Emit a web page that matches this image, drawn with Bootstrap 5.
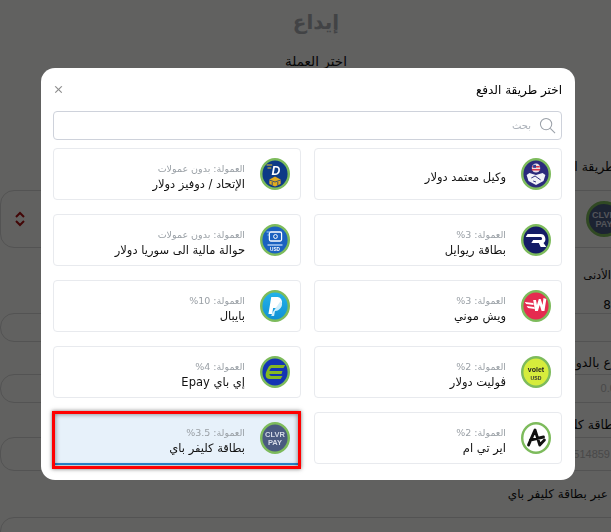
<!DOCTYPE html>
<html lang="ar" dir="rtl">
<head>
<meta charset="utf-8">
<title>إيداع</title>
<link href="https://cdn.jsdelivr.net/npm/bootstrap@5.3.0/dist/css/bootstrap.min.css" rel="stylesheet">
<style>
html,body{height:532px;overflow:hidden}
body{background:#f9f9f7;color:#111;font-family:"DejaVu Sans","Noto Sans",sans-serif}
.page-wrap{width:632px;height:532px;margin-right:-21px;overflow:hidden}
.pg-title{height:44px;padding-top:10px;margin:0;font-size:20px;font-weight:700;color:#a9adb3;text-align:center}
.pg-sub{height:24px;margin-top:4px;padding-top:3px;font-size:13.5px;text-align:center}
.pg-label{font-size:12.5px;padding-right:17px;white-space:nowrap;margin-left:575px;overflow:hidden}
.pg-val{height:17px;margin-top:10px;margin-bottom:-1px;padding-right:21px;font-size:12px;line-height:17px}
.pg-box{border:1px solid #d5d5d5;border-radius:14px;padding-right:9px;font-size:11px;color:#bbb;font-family:"Liberation Sans",sans-serif}
.lb-method{height:20px;margin-top:86px}
.bx-method{height:58px;margin-top:12px}
.lb-min{height:20px;margin-top:19px;padding-right:21px;font-size:11.5px}
.bx-a{height:29px}
.lb-b{height:20px;margin-top:11px;margin-right:-3px;padding-right:0;line-height:20px}
.bx-b{height:29px;margin-top:1px}
.lb-c{height:20px;margin-top:13px;padding-right:14px}
.bx-c{height:34px;margin-top:1px;padding-right:21px}
.lb-d{height:20px;margin-top:13px;padding-right:24px;font-size:12px;line-height:20px}
.bx-d{height:60px;margin-top:13px}
.chev{width:14px;height:20px;margin-left:12px}
.modal-backdrop.show{opacity:.61}
.modal-dialog.pick-dialog{width:534px;max-width:534px;margin:68px 36px 0 41px}
.pick-dialog .modal-content{border:0;border-radius:14px;height:412px}
.pick-dialog .modal-header{height:43px;padding:0 13px 0 13px;border:0;margin-top:0}
.pick-dialog .modal-title{font-size:12px;font-weight:400;line-height:1;color:#000;padding-top:1px}
.pick-dialog .btn-close{width:9px;height:9px;padding:0;margin:0;background-size:9px;opacity:.45}
.pick-dialog .modal-body{padding:0 13px 16px 12px}
.find-box{height:29px;border:1px solid #ced2db;border-radius:4px;margin-bottom:8px;padding:0 5px 0 0}
.find-ph{font-size:10px;color:#aab0b8}
.pay-row{--bs-gutter-x:13px;--bs-gutter-y:14px}
.pay-tile{height:52px;border:1px solid #e8eaee;border-radius:4px;background:#fff;padding:0 10px 0 0;gap:15px}
.pay-tile.picked{height:53px;background:#e7f1fa;border-color:#e7f1fa;border-bottom:2px solid #2b8fdc;border-radius:0}
.pay-ic{width:30px;height:32px;flex:none}
.pay-ic-lg{width:36px;height:36px}
.pay-ring{stroke:#7dbb5c;stroke-width:2.6}
.pay-txt{padding-top:5px}
.pay-fee{font-size:9.5px;color:#9aa0a6;line-height:15px}
.pay-name{font-size:11.5px;color:#111;line-height:16px;white-space:nowrap}
.red-mark{position:absolute;left:-2px;right:-1px;top:-2px;bottom:-6px;border:3px solid #f00;box-shadow:0 0 4px rgba(0,0,0,.55),inset 0 0 5px rgba(0,0,0,.5);pointer-events:none}
svg text{font-family:"Liberation Sans",sans-serif;font-weight:700}
</style>
</head>
<body>
<div class="page-wrap">
  <h1 class="pg-title">إيداع</h1>
  <div class="pg-sub">اختر العملة</div>
  <div class="pg-label lb-method">طريقة الدفع</div>
  <div class="pg-box bx-method d-flex align-items-center justify-content-between">
    <svg class="pay-ic pay-ic-lg" viewBox="0 0 32 32"><circle class="pay-ring" cx="16" cy="16" r="14.700" fill="#4a5a80"/><text x="16" y="15" text-anchor="middle" font-size="8" fill="#d5dae6">CLVR</text><text x="16" y="23" text-anchor="middle" font-size="8" fill="#d5dae6">PAY</text></svg>
    <svg class="chev" viewBox="0 0 14 20" fill="none" stroke="#a11" stroke-width="2"><path d="M3 8l4-4 4 4M3 12l4 4 4-4"/></svg>
  </div>
  <div class="pg-label lb-min">الأدنى</div>
  <div class="pg-label pg-val">8</div>
  <div class="pg-box bx-a"></div>
  <div class="pg-label lb-b">الإيداع بالدولار</div>
  <div class="pg-box bx-b d-flex align-items-center">0.00</div>
  <div class="pg-label lb-c">بطاقة كليفر</div>
  <div class="pg-box bx-c d-flex align-items-center">514859</div>
  <div class="lb-d">عبر بطاقة كليفر باي</div>
  <div class="pg-box bx-d"></div>
</div>

<div class="modal-backdrop show"></div>
<div class="modal d-block" tabindex="-1">
  <div class="modal-dialog pick-dialog">
    <div class="modal-content">
      <div class="modal-header">
        <h5 class="modal-title">اختر طريقة الدفع</h5>
        <button type="button" class="btn-close" aria-label="إغلاق"></button>
      </div>
      <div class="modal-body">
        <div class="find-box d-flex align-items-center gap-2">
          <svg width="17" height="17" viewBox="0 0 18 18" fill="none" stroke="#9aa0a8" stroke-width="1.1"><circle cx="7.5" cy="7.5" r="6"/><path d="M12 12l5 5"/></svg>
          <span class="find-ph">بحث</span>
        </div>
        <div class="row pay-row">
          <div class="col-6"><div class="pay-tile d-flex align-items-center">
            <svg class="pay-ic" preserveAspectRatio="none" viewBox="0 0 32 32"><circle class="pay-ring" cx="16" cy="16" r="14.700" fill="#2b2a7c"/><circle cx="16" cy="10" r="4.500" fill="#e9dfe6"/><path d="M12 8h8v1.500h-8zM11.600 11h8.800v1.500h-8.800z" fill="#d9364a"/><path d="M13 6.800h3v3h-3z" fill="#2f3f9a"/><path d="M6 17l3-2 7 2 7-2 3 2-2 6-8 4-8-4z" fill="#f1f2f8"/><path d="M11 20l4-2 3 2 3 2M13 23l3 1" stroke="#2b2a7c" stroke-width="1" fill="none"/></svg>
            <div class="pay-txt"><div class="pay-name">وكيل معتمد دولار</div></div>
          </div></div>
          <div class="col-6"><div class="pay-tile d-flex align-items-center">
            <svg class="pay-ic" preserveAspectRatio="none" viewBox="0 0 32 32"><circle class="pay-ring" cx="16" cy="16" r="14.700" fill="#0d3a86"/><text x="17" y="17" text-anchor="middle" font-size="13" font-style="italic" fill="#fff">D</text><path d="M7 7h6M8 10h4" stroke="#e8c12f" stroke-width="1.200"/><path d="M10 21.500l6-3 6 3v4.500l-6 2.500-6-2.500z" fill="#e2ab1e"/><path d="M10 22l6 2 6-2M13 24v3M19 24v3" stroke="#0d3a86" stroke-width=".8" fill="none"/></svg>
            <div class="pay-txt"><div class="pay-fee">العمولة: بدون عمولات</div><div class="pay-name">الإتحاد / دوفيز دولار</div></div>
          </div></div>
          <div class="col-6"><div class="pay-tile d-flex align-items-center">
            <svg class="pay-ic" preserveAspectRatio="none" viewBox="0 0 32 32"><circle class="pay-ring" cx="16" cy="16" r="14.700" fill="#141c66"/><path d="M7 10h14a5 5 0 0 1 3 9l3 4h-6l-2-4H11l2-3h8a1.500 1.500 0 0 0 0-3H5z" fill="#fff"/></svg>
            <div class="pay-txt"><div class="pay-fee">العمولة: 3%</div><div class="pay-name">بطاقة ريوايل</div></div>
          </div></div>
          <div class="col-6"><div class="pay-tile d-flex align-items-center">
            <svg class="pay-ic" preserveAspectRatio="none" viewBox="0 0 32 32"><circle class="pay-ring" cx="16" cy="16" r="14.700" fill="#1b62c0"/><rect x="10" y="8" width="13" height="9" rx="1.500" fill="none" stroke="#fff" stroke-width="1.300"/><circle cx="16.500" cy="12.500" r="2" fill="none" stroke="#fff"/><path d="M7 8h4M8 11h2" stroke="#9fd0ff"/><path d="M8 21h16" stroke="#cfe4ff" stroke-width="1.200"/><text x="16" y="27" text-anchor="middle" font-size="5" fill="#fff">USD</text></svg>
            <div class="pay-txt"><div class="pay-fee">العمولة: بدون عمولات</div><div class="pay-name">حوالة مالية الى سوريا دولار</div></div>
          </div></div>
          <div class="col-6"><div class="pay-tile d-flex align-items-center">
            <svg class="pay-ic" preserveAspectRatio="none" viewBox="0 0 32 32"><circle class="pay-ring" cx="16" cy="16" r="14.700" fill="#e52b50"/><path d="M13 10l2 11h3l2-6 2 6h3l2-12-3-1-1 7-2-6h-2l-2 6-1-5zM4 12l9 1 .5 2-8-1zM6 16l8 1 .5 2-7-1z" fill="#fff"/></svg>
            <div class="pay-txt"><div class="pay-fee">العمولة: 3%</div><div class="pay-name">ويش موني</div></div>
          </div></div>
          <div class="col-6"><div class="pay-tile d-flex align-items-center">
            <svg class="pay-ic" preserveAspectRatio="none" viewBox="0 0 32 32"><defs><linearGradient id="pp" x1="0" y1="0" x2="0" y2="1"><stop offset="0" stop-color="#25b4ea"/><stop offset="1" stop-color="#0f8fd3"/></linearGradient></defs><circle class="pay-ring" cx="16" cy="16" r="14.700" fill="url(#pp)"/><path d="M12 7h7a5 5 0 0 1 4 7c-1 3-3 4-7 4h-2l-1 6H9z" fill="#fff"/><path d="M22 11c2 2 2 5 0 7s-3 3-6 3l-1 5h-3l1-3" fill="#cfeefb"/></svg>
            <div class="pay-txt"><div class="pay-fee">العمولة: 10%</div><div class="pay-name">بايبال</div></div>
          </div></div>
          <div class="col-6"><div class="pay-tile d-flex align-items-center">
            <svg class="pay-ic" preserveAspectRatio="none" viewBox="0 0 32 32"><circle class="pay-ring" cx="16" cy="16" r="14.700" fill="#d6ec3c"/><text x="16" y="16" text-anchor="middle" font-size="7.500" fill="#222">volet</text><text x="16" y="24" text-anchor="middle" font-size="5.500" fill="#333">USD</text></svg>
            <div class="pay-txt"><div class="pay-fee">العمولة: 2%</div><div class="pay-name">ڤوليت دولار</div></div>
          </div></div>
          <div class="col-6"><div class="pay-tile d-flex align-items-center">
            <svg class="pay-ic" preserveAspectRatio="none" viewBox="0 0 32 32"><circle class="pay-ring" cx="16" cy="16" r="14.700" fill="#1434b4"/><path d="M12 9h15l-2 3H12a6 6 0 0 0-2 3h14l-1 3H10c0 1 1 2 2 2h12l-2 3H10c-4 0-5-4-3-8s3-6 5-6z" fill="#86b821"/></svg>
            <div class="pay-txt"><div class="pay-fee">العمولة: 4%</div><div class="pay-name">إي باي Epay</div></div>
          </div></div>
          <div class="col-6"><div class="pay-tile d-flex align-items-center">
            <svg class="pay-ic" preserveAspectRatio="none" viewBox="0 0 32 32"><circle class="pay-ring" cx="16" cy="16" r="14.700" fill="#fff"/><path d="M8 23L15 8l5 15M10 18l14-3M20 23l5-5" fill="none" stroke="#111" stroke-width="3" stroke-linecap="round" stroke-linejoin="round"/></svg>
            <div class="pay-txt"><div class="pay-fee">العمولة: 2%</div><div class="pay-name">اير تي ام</div></div>
          </div></div>
          <div class="col-6"><div class="pay-tile picked d-flex align-items-center position-relative">
            <svg class="pay-ic" preserveAspectRatio="none" viewBox="0 0 32 32"><circle class="pay-ring" cx="16" cy="16" r="14.700" fill="#4a5a80"/><text x="16" y="15" text-anchor="middle" font-size="8" fill="#d5dae6">CLVR</text><text x="16" y="23" text-anchor="middle" font-size="8" fill="#d5dae6">PAY</text></svg>
            <div class="pay-txt"><div class="pay-fee">العمولة: 3.5%</div><div class="pay-name">بطاقة كليفر باي</div></div>
            <span class="red-mark"></span>
          </div></div>
        </div>
      </div>
    </div>
  </div>
</div>
<script src="https://cdn.jsdelivr.net/npm/bootstrap@5.3.0/dist/js/bootstrap.bundle.min.js"></script>
</body>
</html>
